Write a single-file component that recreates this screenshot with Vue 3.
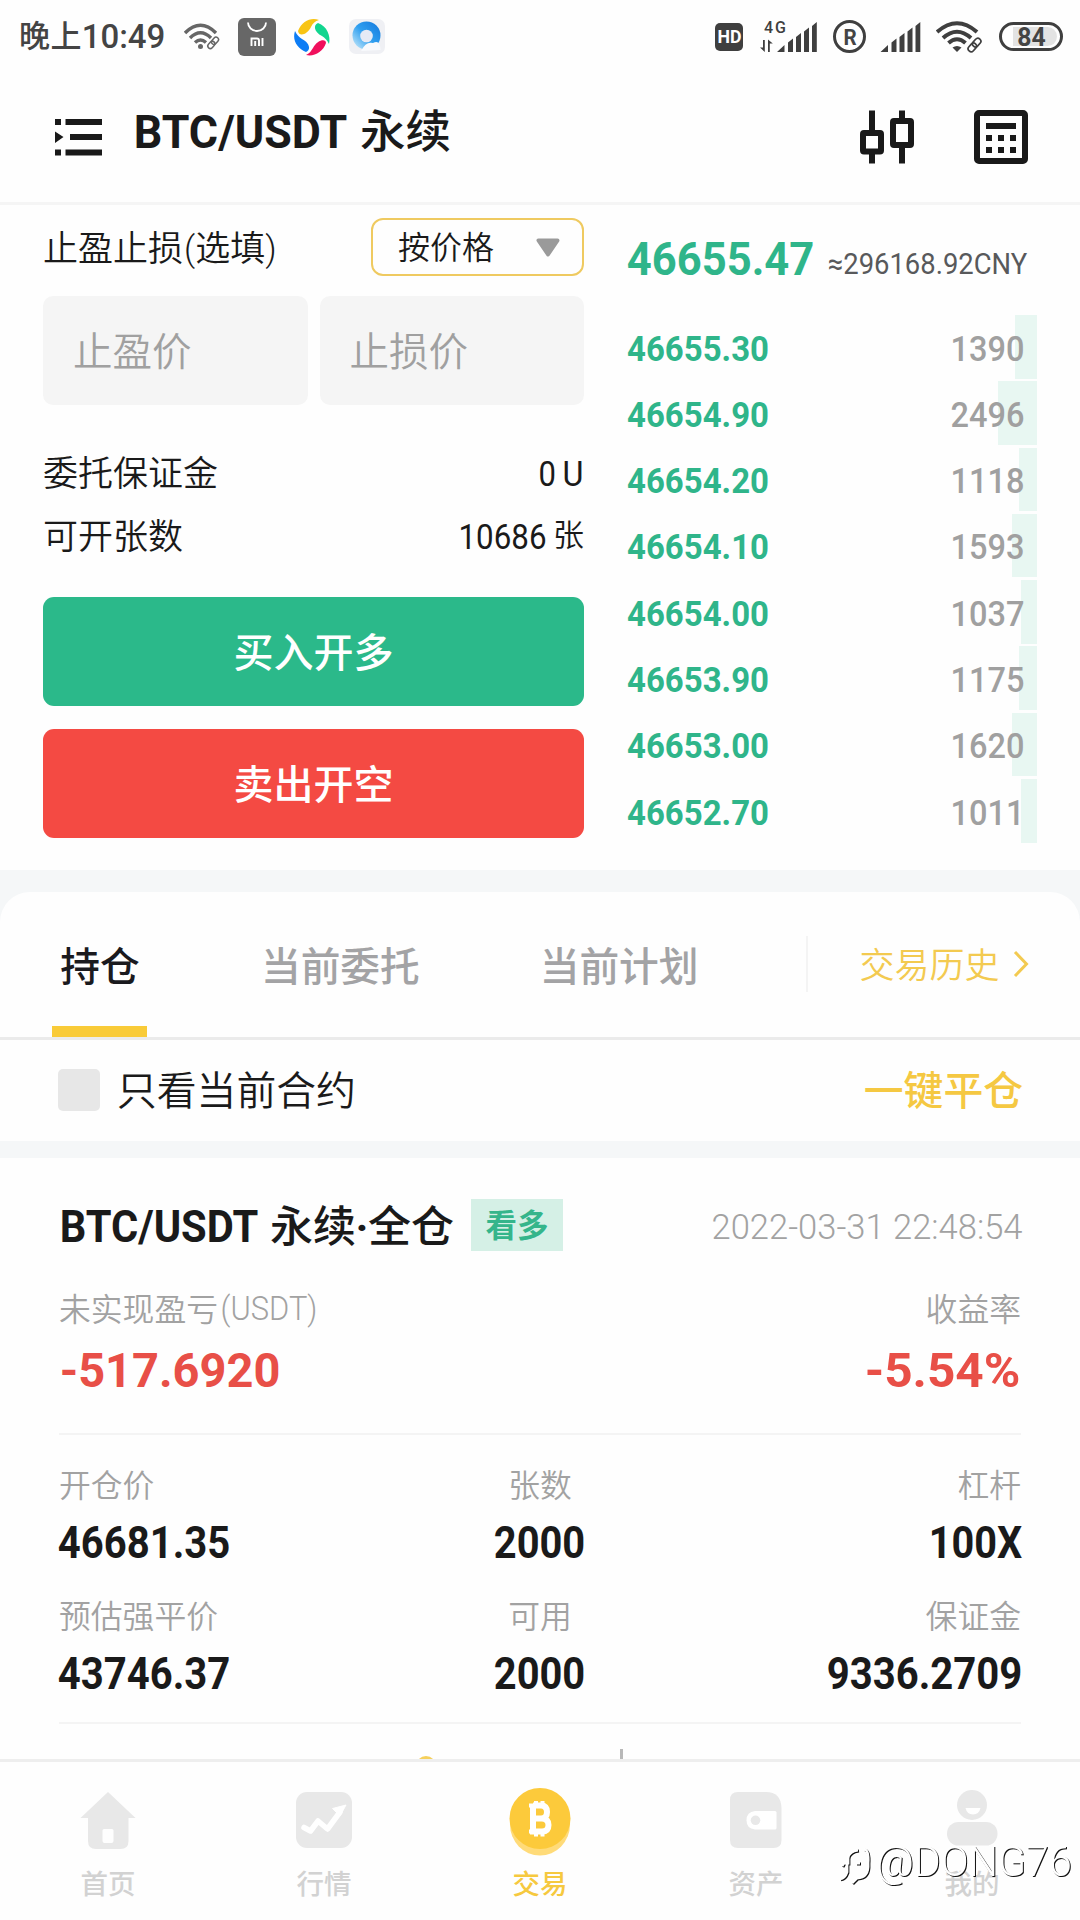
<script setup>
import { h } from 'vue'

// Condensed numeric/latin label: `w` is the drawn width, `cap` the capital height.
const Din = ({ t, w, cap, weight = 400 }) => {
  const size = cap / 0.711
  const side = size * (weight > 500 ? 0.028 : 0.042)
  return h(
    'svg',
    { width: w, height: cap, style: { overflow: 'visible', display: 'block', flex: 'none' } },
    [
      h(
        'text',
        {
          x: -side,
          y: cap,
          textLength: w + side * 2,
          lengthAdjust: 'spacingAndGlyphs',
          fill: 'currentColor',
          'font-family': 'Roboto, "Liberation Sans", sans-serif',
          'font-size': size,
          'font-weight': weight,
        },
        t,
      ),
    ],
  )
}
Din.props = ['t', 'w', 'cap', 'weight']

const book = [
  { price: '46655.30', qty: '1390', bar: 22 },
  { price: '46654.90', qty: '2496', bar: 39.5 },
  { price: '46654.20', qty: '1118', bar: 18 },
  { price: '46654.10', qty: '1593', bar: 25 },
  { price: '46654.00', qty: '1037', bar: 16 },
  { price: '46653.90', qty: '1175', bar: 18 },
  { price: '46653.00', qty: '1620', bar: 25 },
  { price: '46652.70', qty: '1011', bar: 16 },
]

const stats = [
  [
    { label: '开仓价', value: '46681.35', w: 170 },
    { label: '张数', value: '2000', w: 89 },
    { label: '杠杆', value: '100X', w: 91 },
  ],
  [
    { label: '预估强平价', value: '43746.37', w: 170 },
    { label: '可用', value: '2000', w: 89 },
    { label: '保证金', value: '9336.2709', w: 193 },
  ],
]
</script>

<template>
  <div class="page">
    <div class="status">
      <div class="status-left">
        <span class="ampm">晚上</span>
        <Din class="clock" t="10:49" :w="81" :cap="23" :weight="500" />
        <svg class="s-wifi" width="36" height="28" viewBox="0 0 36 28" fill="none" stroke="#666" stroke-width="3.4">
          <path d="M1 10 Q16.5 -5.5 32 10" />
          <path d="M6 15 Q16.5 4.500 27 15" />
          <path d="M11 19.500 Q16.500 14.500 22 19.500" />
          <circle cx="16.500" cy="23.500" r="2.500" fill="#666" stroke="none" />
          <g stroke="#fff" stroke-width="5"><path d="M25 25 L33 16" /></g>
          <g stroke-width="1.500" transform="rotate(-48 29 20)">
            <rect x="22.500" y="17.500" width="8" height="5" rx="2.500" />
            <rect x="28" y="17.500" width="8" height="5" rx="2.500" />
          </g>
        </svg>
        <svg class="s-mi" width="38" height="38" viewBox="0 0 38 38">
          <rect width="38" height="38" rx="6" fill="#676767" />
          <path d="M10 4.500 a9 8.500 0 0 0 18 0" fill="none" stroke="#fff" stroke-width="1.800" />
          <path d="M13.500 28 V20.500 H19 q2 0 2 2 V28 M17.200 23 V28 M24.500 20 V28" fill="none" stroke="#fff" stroke-width="1.900" />
        </svg>
        <svg class="s-ring" width="38" height="38" viewBox="0 0 38 38">
          <path d="M5 13 C9 3 18 -1 26 2 C22 3 20 5 18 9 C14 17 6 19 5 13Z" fill="#f8c414" />
          <path d="M25 5 C34 8 38 18 36 26 C34 22 32 20 29 18 C21 14 20 7 25 5Z" fill="#12d58f" />
          <path d="M33 25 C30 34 21 39 13 37 C17 35 18 33 20 30 C24 22 33 20 33 25Z" fill="#f0105c" />
          <path d="M13 34 C4 30 -1 22 2 13 C4 17 6 19 9 21 C17 25 18 32 13 34Z" fill="#0d7df5" />
        </svg>
        <svg class="s-qq" width="36" height="36" viewBox="0 0 36 36">
          <defs>
            <linearGradient id="qq" x1="1" y1="0" x2="0" y2="1">
              <stop offset="0" stop-color="#1377dc" /><stop offset=".5" stop-color="#2f9ff0" /><stop offset="1" stop-color="#d4f0fb" />
            </linearGradient>
          </defs>
          <rect width="36" height="35" rx="7" fill="#eff0f4" />
          <circle cx="17.500" cy="16.500" r="14" fill="url(#qq)" />
          <path d="M12 32 Q17 22 24 24 Q31 20 31.500 31 Z" fill="#f8fafd" />
          <circle cx="17.500" cy="17" r="6.300" fill="#e6eaf5" />
        </svg>
      </div>
      <div class="status-right">
        <span class="hd"><Din t="HD" :w="23" :cap="13" :weight="700" /></span>
        <svg class="s-4g" width="57" height="32" viewBox="0 0 57 32" fill="#3f3f3f">
          <text x="4" y="12" font-family="Roboto, sans-serif" font-size="16" font-weight="500" textLength="22">4G</text>
          <path d="M3 19 h1.800 v12 L0 26.500 h3z M8 31 h1.800 v-8.500 h3 L8 18.500z" />
          <path d="M17 31 L24.500 24 V31z M28 21.500 l5 -4 V31 h-5z M36 16 l5 -4 V31 h-5z M44 10.500 l5 -4 V31 h-5z M52 5 l4.800 -4 V31 h-4.800z" />
        </svg>
        <span class="reg"><Din t="R" :w="12" :cap="15.500" :weight="700" /></span>
        <svg class="s-sig" width="41" height="32" viewBox="16.500 0 41 32" fill="#3f3f3f">
          <path d="M17 31 L24.500 24 V31z M28 21.500 l5 -4 V31 h-5z M36 16 l5 -4 V31 h-5z M44 10.500 l5 -4 V31 h-5z M52 5 l4.800 -4 V31 h-4.800z" />
        </svg>
        <svg class="s-wifi2" width="47" height="32" viewBox="0 0 47 32" fill="none" stroke="#3f3f3f" stroke-width="4">
          <path d="M1 11 Q21 -6.500 41 11" />
          <path d="M7 17 Q21 4.500 35 17" />
          <path d="M12.500 22 Q21 14.500 29.500 22" />
          <path d="M16.500 26.500 Q21 23.500 25.500 26.500 L21 31Z" fill="#3f3f3f" stroke="none" />
          <path d="M33 30 L43 18" stroke="#fff" stroke-width="5" />
          <g stroke-width="1.700" transform="rotate(-48 38.500 24)">
            <rect x="30.500" y="21" width="9.500" height="6" rx="3" />
            <rect x="37" y="21" width="9.500" height="6" rx="3" />
          </g>
        </svg>
        <span class="battery"><i></i><Din class="pct" t="84" :w="27" :cap="18.500" :weight="700" /></span>
      </div>
    </div>

    <header class="header">
      <svg width="48" height="37" viewBox="0 0 48 37" fill="#191919">
        <path d="M0 0h6v6H0z M10.500 0H47v6H10.500z M15 15h32v6H15z M10.500 30.500H47v6H10.500z M0 30.500h6v6H0z M0 12.500l8.500 5.500L0 24z" />
      </svg>
      <Din class="pair" t="BTC/USDT" :w="211" :cap="33" :weight="700" />
      <span class="perp">永续</span>
      <svg class="candle" width="54" height="54" viewBox="0 0 54 54" fill="none" stroke="#191919" stroke-width="6">
        <path d="M12 0.500V22M12 44v9.500M42 0.500V10M42 38v15.500" />
        <rect x="3" y="23" width="18" height="18.500" rx="1" />
        <rect x="33" y="11" width="18" height="24" rx="1" />
      </svg>
      <svg class="calc" width="54" height="54" viewBox="0 0 54 54" fill="#191919">
        <rect x="3" y="3" width="48" height="48" rx="2" fill="none" stroke="#191919" stroke-width="6" />
        <path d="M12 13h30v6H12z M12 25h6v6h-6z M24 25h6v6h-6z M36 25h6v6h-6z M12 37h6v6h-6z M24 37h6v6h-6z M36 37h6v6h-6z" />
      </svg>
    </header>

    <section class="trade">
      <div class="form">
        <div class="form-head">
          <span class="lbl">止盈止损<i class="open">(</i>选填<i>)</i></span>
          <div class="select">
            <span>按价格</span>
            <svg width="24" height="19" viewBox="0 0 24 19"><path d="M2.500 2.500H21.500L12 16.500Z" fill="#9a9a9a" stroke="#9a9a9a" stroke-width="4" stroke-linejoin="round" /></svg>
          </div>
        </div>
        <div class="inputs">
          <div class="input">止盈价</div>
          <div class="input">止损价</div>
        </div>
        <div class="kv first">
          <span class="lbl">委托保证金</span>
          <Din t="0" :w="14.500" :cap="25" /><Din class="u" t="U" :w="18" :cap="25" />
        </div>
        <div class="kv">
          <span class="lbl">可开张数</span>
          <Din t="10686" :w="85" :cap="25" /><span class="unit">张</span>
        </div>
        <div class="btn buy">买入开多</div>
        <div class="btn sell">卖出开空</div>
      </div>

      <div class="book">
        <div class="last">
          <Din t="46655.47" :w="185" :cap="33.500" :weight="700" />
          <Din class="cny" t="≈296168.92CNY" :w="197" :cap="21" />
        </div>
        <div v-for="r in book" :key="r.price" class="level">
          <div class="depth" :style="{ width: r.bar + 'px' }"></div>
          <Din class="price" :t="r.price" :w="140" :cap="25" :weight="700" />
          <Din class="qty" :t="r.qty" :w="71" :cap="25" :weight="500" />
        </div>
      </div>
    </section>

    <div class="band">
      <nav class="tabs">
        <div class="tab active"><span>持仓</span></div>
        <div class="tab t2">当前委托</div>
        <div class="tab t3">当前计划</div>
        <div class="history">
          <span>交易历史</span>
          <svg width="16" height="28" viewBox="0 0 16 28" fill="none" stroke="#f3ca50" stroke-width="3"><path d="M2 2L13.500 14L2 26" /></svg>
        </div>
      </nav>
    </div>

    <div class="filter">
      <i class="check"></i>
      <span>只看当前合约</span>
      <b>一键平仓</b>
    </div>

    <section class="card">
      <div class="card-head">
        <Din class="sym" t="BTC/USDT" :w="196" :cap="31" :weight="700" />
        <span class="name">永续<i>·</i>全仓</span>
        <span class="tag">看多</span>
        <Din class="date" t="2022-03-31 22:48:54" :w="308" :cap="25" :weight="300" />
      </div>
      <div class="row label pnl">
        <span class="with-latin">未实现盈亏<Din class="ccy" t="(USDT)" :w="94" :cap="23.500" :weight="300" /></span>
        <span>收益率</span>
      </div>
      <div class="row red">
        <Din t="-517.6920" :w="218" :cap="34.700" :weight="700" />
        <Din t="-5.54%" :w="153" :cap="34.700" :weight="700" />
      </div>
      <div class="line"></div>
      <div v-for="(g, i) in stats" :key="i" class="grid">
        <div v-for="c in g" :key="c.label" class="cell">
          <span class="label">{{ c.label }}</span>
          <Din class="num" :t="c.value" :w="c.w" :cap="31" :weight="700" />
        </div>
      </div>
      <div class="line second"></div>
      <i class="peek-dot"></i>
      <i class="peek-tick"></i>
    </section>

    <footer class="tabbar">
      <div class="item">
        <svg width="56" height="68" viewBox="0 0 56 68" fill="#e8e8e8">
          <path fill-rule="evenodd" d="M28 4 L55.500 30 H48.500 V53 q0 8 -8 8 H16 q-8 0 -8 -8 V30 H0.500Z M24 41 q-1.500 0 -1.500 1.500 V53 q0 2 2 2 H31.500 q2 0 2 -2 V42.500 q0 -1.500 -1.500 -1.500Z" />
        </svg>
        <span>首页</span>
      </div>
      <div class="item">
        <svg width="56" height="68" viewBox="0 0 56 68">
          <rect y="4" width="56" height="56" rx="11" fill="#e8e8e8" />
          <path d="M8 39.500 L14.500 43 L22 33 L31.500 41 L44 24" fill="none" stroke="#fff" stroke-width="5.500" stroke-linecap="round" stroke-linejoin="round" />
          <path d="M36.500 20.500 L50 17 L44 28Z" fill="#fff" stroke="#fff" stroke-linejoin="round" />
        </svg>
        <span>行情</span>
      </div>
      <div class="item on">
        <svg width="62" height="68" viewBox="0 0 62 68">
          <ellipse cx="31" cy="36.500" rx="30" ry="31" fill="#ffdb79" />
          <circle cx="31" cy="30.500" r="30.500" fill="#fcca3b" />
          <path d="M24 17.500 V43.500 H33 q6.500 0 6.500 -6.500 q0 -6 -6.500 -6.500 H25 M24 17.500 H32 q6 0 6 6.500 q0 6.500 -6 6.500" fill="none" stroke="#fff" stroke-width="6" />
          <path d="M27 13v6M33.500 13v6M27 42v6.500M33.500 42v6.500M20 17.500h6M20 43.500h6" stroke="#fff" stroke-width="4" />
        </svg>
        <span>交易</span>
      </div>
      <div class="item">
        <svg width="52" height="68" viewBox="0 0 52 68">
          <path d="M8 4 H36 Q51 4 51.500 20 V52 q0 8 -8 8 H8 q-8 0 -8 -8 V12 q0 -8 8 -8Z" fill="#e8e8e8" />
          <path d="M25 23 H45 q1.500 0 1.500 1.500 V40 q0 1.500 -1.500 1.500 H25 q-8.500 -1 -8.500 -9.250 T25 23Z" fill="#fff" />
          <circle cx="25.500" cy="32.300" r="4.800" fill="#e8e8e8" />
        </svg>
        <span>资产</span>
      </div>
      <div class="item">
        <svg width="52" height="68" viewBox="0 0 52 68" fill="#e8e8e8">
          <circle cx="26" cy="17" r="15" />
          <path d="M19.500 20 H34.500 Q33 26.500 27 26.500 T19.500 20Z" fill="#fff" />
          <rect x="1" y="34" width="50.500" height="23.500" rx="11.500" />
        </svg>
        <span>我的</span>
      </div>
      <div class="mark">
        <svg width="36" height="40" viewBox="0 0 36 40" fill="none" stroke="#fff" stroke-width="2.800">
          <path d="M5 21 L7 18 H11 V13 Q12 6 21 5 M27 4 Q32 5 31 18 Q32 33 20 33 L15 38 M10 19 V27 Q8 33 3 34 M19 18 h4" />
        </svg>
        <Din class="handle" t="@DONG76" :w="192" :cap="30" :weight="300" />
      </div>
    </footer>
  </div>
</template>

<style>
body {
  margin: 0;
  background: #fff;
}
</style>

<style scoped>
.page {
  width: 1080px;
  height: 1920px;
  overflow: hidden;
  display: flex;
  flex-direction: column;
  background: #fefefe;
  color: #1a1a1a;
  font-family: Roboto, 'Noto Sans CJK SC', sans-serif;
}
.page > * { flex: none; }
i { font-style: normal; }

.status {
  height: 73px;
  display: flex;
  justify-content: space-between;
  align-items: center;
  box-sizing: border-box;
  padding: 0 17px 0 19px;
  color: #444;
}
.status-left, .status-right { display: flex; align-items: center; }
.ampm { font-size: 31px; line-height: 36px; font-weight: 500; letter-spacing: 0.5px; }
.clock { margin-left: 1px; }
.s-wifi { margin-left: 20px; }
.s-mi { margin-left: 18px; }
.s-ring { margin-left: 17px; }
.s-qq { margin-left: 18px; }
.hd {
  width: 28px;
  height: 28px;
  display: flex;
  align-items: center;
  justify-content: center;
  border-radius: 5px;
  background: #3f3f3f;
  color: #fff;
}
.s-4g { margin-left: 17px; overflow: visible; }
.reg {
  width: 27px;
  height: 27px;
  margin-left: 16px;
  border: 3px solid #3f3f3f;
  border-radius: 50%;
  display: flex;
  align-items: center;
  justify-content: center;
}
.s-sig { margin-left: 14px; }
.s-wifi2 { margin-left: 15px; }
.battery {
  position: relative;
  width: 58px;
  height: 23px;
  margin-left: 16px;
  border: 3px solid #3f3f3f;
  border-radius: 16px;
  display: flex;
  align-items: center;
  justify-content: center;
}
.battery i {
  position: absolute;
  left: 11px;
  top: 2px;
  width: 44px;
  height: 19px;
  border-radius: 0 10px 10px 0;
  background: #e3e3e3;
}
.pct { position: relative; }

.header {
  height: 129px;
  display: flex;
  align-items: center;
  padding: 0 52px 0 55px;
  border-bottom: 3px solid #f5f5f5;
}
.pair { margin: -12px 0 0 32px; }
.perp { margin: -10px 0 0 14px; font-size: 45.500px; line-height: 50px; font-weight: 500; }
.candle { margin: -2px 0 0 auto; }
.calc { margin: -2px 0 0 60px; }

.trade {
  height: 665px;
  display: flex;
  justify-content: space-between;
  box-sizing: border-box;
  padding: 13px 43px 0;
}
.form { width: 541px; display: flex; flex-direction: column; font-weight: 350; }
.form-head { height: 58px; display: flex; justify-content: space-between; align-items: center; }
.lbl { font-size: 35px; line-height: 40px; margin-top: 5px; }
.open { margin-left: 1px; }
.select {
  width: 213px;
  height: 58px;
  box-sizing: border-box;
  padding: 0 22px 0 25px;
  border: 2px solid #efca60;
  border-radius: 12px;
  display: flex;
  align-items: center;
  justify-content: space-between;
}
.select span { font-size: 32px; line-height: 36px; margin-top: 2px; }
.inputs { display: flex; gap: 12px; margin-top: 20px; }
.input {
  flex: 1;
  height: 108.500px;
  box-sizing: border-box;
  padding: 5px 0 0 30px;
  border-radius: 10px;
  background: #f5f5f5;
  color: #a0a0a0;
  font-size: 39.500px;
  line-height: 104px;
}
.kv { height: 63px; display: flex; align-items: center; }
.kv.first { margin-top: 37px; }
.kv .lbl { flex: 1; margin-top: 4px; }
.u { margin: 0 2px 0 10px; }
.unit { margin: 0 0 0 8px; font-size: 31px; line-height: 40px; }
.btn {
  height: 109px;
  border-radius: 11px;
  color: #fff;
  font-size: 40px;
  font-weight: 500;
  line-height: 114px;
  text-align: center;
}
.buy { margin-top: 29.500px; background: #2bb98a; }
.sell { margin-top: 23px; background: #f44a43; }

.book { width: 409px; color: #2fb58a; }
.last { height: 56px; padding: 0 11px 0 0; margin-bottom: 41px; display: flex; align-items: flex-end; justify-content: space-between; }
.cny { color: #58595b; }
.level {
  position: relative;
  height: 66.300px;
  display: flex;
  justify-content: space-between;
  box-sizing: border-box;
  padding: 20.500px 14px 0 0;
}
.depth { position: absolute; right: 0; top: 0; height: 63.500px; background: #e8f7f2; }
.price, .qty { position: relative; }
.qty { color: #a0a0a0; }

.band { height: 170px; background: #f5f7f8; }
.tabs {
  height: 145px;
  margin-top: 22px;
  border-radius: 30px 30px 0 0;
  border-bottom: 3px solid #ebebeb;
  background: #fefefe;
  display: flex;
  font-size: 39.700px;
  font-weight: 500;
}
.tab { height: 145px; box-sizing: border-box; line-height: 152px; color: #a3a3a5; white-space: nowrap; }
.active { width: 95px; margin-left: 52px; text-align: center; color: #1a1a1e; border-bottom: 11px solid #f9cb38; }
.active span { margin-left: 1px; }
.t2 { margin-left: 114px; }
.t3 { margin-left: 120px; }
.history {
  flex: 1;
  height: 56px;
  margin: 44px 51px 0 107px;
  border-left: 2px solid #f4f4f4;
  display: flex;
  align-items: center;
  justify-content: space-between;
  padding-left: 52px;
  color: #f3ca50;
  font-size: 35px;
  font-weight: 350;
  line-height: 56px;
}
.history span { margin-top: 5px; }

.filter {
  height: 101px;
  display: flex;
  align-items: center;
  padding: 0 57px 0 58px;
  font-size: 39.800px;
  line-height: 96px;
  font-weight: 350;
  border-bottom: 17px solid #f5f7f8;
}
.filter span, .filter b { margin-top: 3px; }
.check { width: 42px; height: 42px; margin: -1px 17px 0 0; border-radius: 5px; background: #e7e7e7; }
.filter b { margin-left: auto; color: #f5c842; font-weight: 500; }

.card { position: relative; height: 601px; box-sizing: border-box; padding: 41px 59px 0; }
.card-head { height: 52px; display: flex; align-items: center; padding-left: 2px; }
.sym { margin-top: 2px; }
.name { margin: 3px 0 0 13px; font-size: 43px; line-height: 52px; font-weight: 500; display: flex; }
.name i { width: 12px; display: flex; justify-content: center; font-weight: 700; }
.tag {
  width: 92px;
  height: 52px;
  margin-left: 17px;
  background: #d5f0e6;
  color: #35b58b;
  font-size: 31.500px;
  font-weight: 700;
  line-height: 56px;
  text-align: center;
}
.date { margin: 2px 0 0 auto; color: #a2a2a2; }
.row { display: flex; justify-content: space-between; }
.label { color: #a2a2a2; font-size: 31.800px; line-height: 40px; font-weight: 350; }
.with-latin { display: flex; align-items: center; gap: 4px; }
.ccy { margin-top: -4px; }
.pnl { margin-top: 39px; }
.red { color: #e84f47; margin-top: 22px; padding: 0 2px; }
.line { height: 2px; background: #f4f4f4; margin-top: 46px; }
.grid { display: grid; grid-template-columns: 1fr 1fr 1fr; margin-top: 31px; height: 100px; }
.cell { display: flex; flex-direction: column; align-items: flex-start; }
.cell:nth-child(2) { align-items: center; }
.cell:nth-child(3) { align-items: flex-end; }
.num { margin-top: 21px; }
.line.second { margin-top: 25px; }
.peek-dot { position: absolute; left: 416px; bottom: -17px; width: 20px; height: 20px; border-radius: 50%; background: #f5d05c; }
.peek-tick { position: absolute; left: 620px; bottom: 0; width: 3px; height: 10px; background: #b8b8b8; }

.tabbar {
  position: relative;
  height: 158px;
  border-top: 3px solid #eee;
  background: #fefefe;
  display: flex;
}
.item {
  width: 216px;
  display: flex;
  flex-direction: column;
  align-items: center;
  padding-top: 26px;
  color: #d2d2d2;
  font-size: 27.500px;
  font-weight: 500;
  line-height: 32px;
}
.item span { margin-top: 13px; }
.on { color: #f6c93f; }
.mark {
  position: absolute;
  left: 837px;
  top: 83px;
  display: flex;
  align-items: flex-start;
  color: #fff;
  filter: drop-shadow(1.2px 1px 0 #111);
}
.handle { margin: 1px 0 0 5px; }
</style>
